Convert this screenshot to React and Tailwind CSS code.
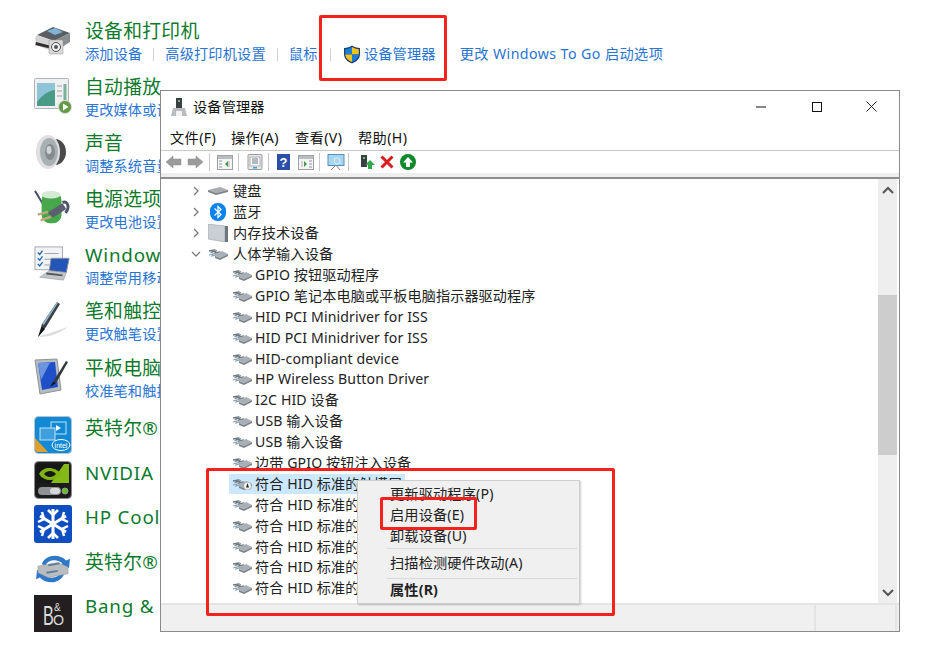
import React from "react";

const FONT = "font-['Noto_Sans','Noto_Sans_CJK_SC',sans-serif]";

const PrinterIcon = () => (
  <svg width="38" height="30" viewBox="0 0 38 30">
    <path d="M3 10 L19 2 L36 8 L20 16Z" fill="#5a5e63" />
    <path d="M13 6 L21 3 L29 7 L21 10Z" fill="#7fb4d8" />
    <path d="M1 13 L3 10 L20 16 V27 L2 20Z" fill="#d4d4d4" />
    <path d="M20 16 L36 8 V17 L20 27Z" fill="#8a8d90" />
    <rect x="2" y="17" width="14" height="3" fill="#2f2f2f" transform="rotate(14 2 17)" />
    <rect x="15" y="15" width="14" height="14" rx="1" fill="#d9d9d9" stroke="#8f8f8f" strokeWidth="0.5" />
    <circle cx="22" cy="22" r="4.5" fill="#efefef" stroke="#555" />
    <circle cx="22" cy="22" r="2" fill="#555" />
  </svg>
);

const AutoplayIcon = () => (
  <svg width="38" height="36" viewBox="0 0 38 36">
    <rect x="0.5" y="0.5" width="34" height="30" rx="1" fill="#eef0f2" stroke="#b0b4b8" />
    <rect x="3" y="5" width="18" height="23" fill="#4b9a85" />
    <path d="M3 5 H21 V12 C14 13 8 17 3 24Z" fill="#8fc4d8" />
    <rect x="23" y="7" width="5" height="2" fill="#c5c9cc" />
    <rect x="23" y="12" width="5" height="2" fill="#c5c9cc" />
    <rect x="23" y="17" width="5" height="2" fill="#c5c9cc" />
    <rect x="29.5" y="6" width="3" height="16" fill="#7fb09a" />
    <circle cx="31" cy="29" r="6.5" fill="#5f9a45" stroke="#d8d8d8" />
    <path d="M29 25.5 L34.5 29 L29 32.5Z" fill="#fff" />
  </svg>
);

const SpeakerIcon = () => (
  <svg width="34" height="36" viewBox="0 0 34 36">
    <ellipse cx="21" cy="18" rx="11" ry="13" fill="#4a4a4a" />
    <ellipse cx="14" cy="18" rx="12" ry="17" fill="#dfdfdf" />
    <ellipse cx="15" cy="18" rx="9" ry="14" fill="#a9b0b3" />
    <ellipse cx="16" cy="18" rx="5" ry="8" fill="#858b8f" />
    <ellipse cx="15" cy="16" rx="2.5" ry="4" fill="#cfd5d8" />
  </svg>
);

const PowerIcon = () => (
  <svg width="40" height="40" viewBox="0 0 40 40">
    <path d="M30 14 C36 12 38 20 33 25" fill="none" stroke="#4b4f6a" strokeWidth="3" />
    <path d="M1 2 C5 8 7 12 9 15" fill="none" stroke="#4b4f6a" strokeWidth="2" />
    <rect x="8" y="3" width="21" height="33" rx="9" fill="#46a84a" />
    <ellipse cx="18" cy="6" rx="10" ry="4" fill="#d5ead5" />
    <path d="M14 25 L30 15 L34 21 L20 30Z" fill="#5c5f74" />
    <path d="M4 27 L15 24 M7 33 L18 29" stroke="#c2a878" strokeWidth="2.5" />
  </svg>
);

const MobilityIcon = () => (
  <svg width="40" height="38" viewBox="0 0 40 38">
    <rect x="1" y="1" width="29" height="24" fill="#f2f3f5" stroke="#a4a8ac" />
    <path d="M4 7 L6 9 L9 5 M4 13 L6 15 L9 11 M4 19 L6 21 L9 17" fill="none" stroke="#2c6fb8" strokeWidth="1.5" />
    <path d="M11 8 H26 M11 14 H18 M11 20 H16" stroke="#9aa0a6" />
    <path d="M18 13 L37 13 L34 28 L16 26Z" fill="#2455b8" stroke="#8a9099" />
    <path d="M16 26 L34 28 L31 36 L6 33Z" fill="#c4c7ca" stroke="#85888c" strokeWidth="0.5" />
    <path d="M13 29 L30 31" stroke="#55585c" strokeWidth="2" />
  </svg>
);

const PenIcon = () => (
  <svg width="38" height="40" viewBox="0 0 38 40">
    <path d="M6 36 C16 34 26 29 34 27 C26 33 16 37 6 37Z" fill="#dcdcdc" />
    <path d="M4 37 L8 24 L23 2 L26 4 L12 27Z" fill="#3b4046" />
    <path d="M8 24 L23 2 L24 3 L10 25Z" fill="#8fb0c8" />
    <path d="M4 37 L8 27 L11 29Z" fill="#101214" />
  </svg>
);

const TabletIcon = () => (
  <svg width="36" height="38" viewBox="0 0 36 38">
    <path d="M1 2 L23 1 L27 32 L6 36Z" fill="#b7bcc0" stroke="#8f9499" />
    <path d="M4 5 L21 4 L24 29 L8 32Z" fill="#1e50c8" />
    <path d="M4 5 L16 4.5 L7 22Z" fill="#6d94e0" />
    <path d="M19 24 L32 3 L34 4 L22 25Z" fill="#34383c" />
    <path d="M16 29 L19 24 L22 25Z" fill="#101214" />
  </svg>
);

const IntelIcon = () => (
  <svg width="38" height="38" viewBox="0 0 38 38">
    <rect x="0.5" y="0.5" width="37" height="37" rx="4" fill="#1289d4" stroke="#b5c4cf" />
    <path d="M1 22 L14 36 H5 C2 36 1 35 1 32Z" fill="#e0a030" />
    <rect x="17" y="6" width="15" height="12" fill="none" stroke="#bfe3f7" />
    <rect x="6" y="12" width="15" height="12" fill="#3ea0dd" stroke="#bfe3f7" />
    <path d="M22 9 L27 12 L22 15Z" fill="#fff" />
    <ellipse cx="27" cy="29" rx="9" ry="5.5" fill="none" stroke="#fff" />
    <text x="27" y="31.5" textAnchor="middle" fontSize="7" fill="#fff" fontFamily="Liberation Sans">intel</text>
  </svg>
);

const NvidiaIcon = () => (
  <svg width="38" height="38" viewBox="0 0 38 38">
    <rect x="0.5" y="0.5" width="37" height="37" rx="4" fill="#1b1b1b" stroke="#8c8c8c" />
    <path d="M3 3 H30 L17 22 H3Z" fill="#161616" />
    <path d="M30 3 H35 V22 H17Z" fill="#86b817" />
    <path d="M5 13 C10 4 22 6 27 13 C22 21 10 21 5 13Z" fill="#7fb414" />
    <path d="M10 13 C13 9 19 9 22 13 C19 17 13 17 10 13Z" fill="#161616" />
    <rect x="4" y="26" width="23" height="8" rx="4" fill="#8f9295" />
    <rect x="16" y="27" width="10" height="6" rx="3" fill="#d5d7d8" />
    <circle cx="31" cy="30" r="3" fill="#5fc21f" stroke="#9b9b9b" />
  </svg>
);

const SnowIcon = () => (
  <svg width="38" height="38" viewBox="0 0 38 38">
    <rect width="38" height="38" rx="3" fill="#0f4ec0" />
    <g stroke="#fff" strokeWidth="3" fill="none">
      <path d="M19 4 V34 M6 11 L32 27 M32 11 L6 27" />
      <path d="M14 5 L19 10 L24 5 M14 33 L19 28 L24 33 M4 17 L10 14 L8 7 M34 17 L28 14 L30 7 M4 21 L10 24 L8 31 M34 21 L28 24 L30 31" strokeWidth="2.5" />
    </g>
  </svg>
);

const RstIcon = () => (
  <svg width="38" height="32" viewBox="0 0 38 34">
    <path d="M7 12 C10 3 24 -1 33 8 L37 6 L36 16 L26 14 L29 11 C23 6 14 7 11 13Z" fill="#2f78c8" />
    <path d="M31 22 C28 31 14 35 5 26 L1 28 L2 18 L12 20 L9 23 C15 28 24 27 27 21Z" fill="#2f78c8" />
    <path d="M3 14 L24 10 L35 15 V22 L14 26 L3 21Z" fill="#b9bdc0" stroke="#8e9296" strokeWidth="0.5" />
    <path d="M14 13 L26 11 M12 21 L24 19" stroke="#5e7f9c" strokeWidth="2" />
  </svg>
);

const BangIcon = () => (
  <svg width="38" height="37" viewBox="0 0 38 37">
    <rect width="38" height="37" fill="#231f20" />
    <text x="0" y="0" fontSize="27" fill="#dcdcdc" fontFamily="Liberation Sans" transform="translate(9 30) scale(0.6 1)">B</text>
    <text x="20" y="16" fontSize="10" fill="#dcdcdc" fontFamily="Liberation Sans">&amp;</text>
    <text x="0" y="0" fontSize="15" fill="#dcdcdc" fontFamily="Liberation Sans" transform="translate(19 30) scale(0.95 1)">O</text>
  </svg>
);

const ShieldIcon = () => (
  <svg width="18" height="19" viewBox="0 0 18 19" className="-my-[2px]">
    <path d="M9 0.5 C11 2 14 3 17 3 V9 C17 14 13 17 9 18.5 C5 17 1 14 1 9 V3 C4 3 7 2 9 0.5Z" fill="#1f3f73" />
    <path d="M9 2 V9.5 H2.2 V4.2 C4.8 4 7 3.2 9 2Z" fill="#1a7fd6" />
    <path d="M9 2 C11 3.2 13.2 4 15.8 4.2 V9.5 H9Z" fill="#f6c21c" />
    <path d="M2.2 9.5 H9 V17 C5.5 15.6 2.6 13.2 2.2 9.5Z" fill="#f6c21c" />
    <path d="M15.8 9.5 H9 V17 C12.5 15.6 15.4 13.2 15.8 9.5Z" fill="#1a7fd6" />
  </svg>
);

const DeviceMgrIcon = () => (
  <svg width="18" height="20" viewBox="0 0 18 20">
    <rect x="6" y="1" width="6" height="10" fill="#3a3f44" />
    <rect x="8" y="3" width="2" height="2" fill="#63c06a" />
    <path d="M3 11 H15 L17 19 H1Z" fill="#b9bcbf" />
    <rect x="6" y="14" width="6" height="5" fill="#f2f2f2" />
  </svg>
);

const HidIcon = ({ warn }) => (
  <svg width="20" height="12" viewBox="0 0 20 12" className="shrink-0">
    <path d="M1 3 L6 2 L4 4 L8 3 L7 5 L12 4" fill="none" stroke="#6f7a82" strokeWidth="1.3" />
    <path d="M5 7 L14 3 L20 6 L12 10Z" fill="#a8b0b6" />
    <path d="M7 8 L12 10 L20 6 V8 L12 12 L7 10Z" fill="#7e858a" />
    <path d="M1 7 L5 6 L4 8 L7 7" fill="none" stroke="#8ba6bb" strokeWidth="1.2" />
    {warn && <circle cx="15.5" cy="8" r="4" fill="#f4f4f4" stroke="#777" strokeWidth="0.5" />}
    {warn && <path d="M15.5 5 L17 9.5 H14Z" fill="#222" />}
  </svg>
);

const KeyboardIcon = () => (
  <svg width="20" height="10" viewBox="0 0 20 10">
    <path d="M0 4 L12 1 L20 4 L8 7Z" fill="#a9adb0" />
    <path d="M0 4 L8 7 L20 4 V6 L8 9 L0 6Z" fill="#7f8386" />
  </svg>
);

const BluetoothIcon = () => (
  <svg width="16" height="18" viewBox="0 0 16 18">
    <rect width="16" height="18" rx="7.5" fill="#0a82f0" />
    <path d="M4.5 5.5 L11 11.5 L8 14.5 V3.5 L11 6.5 L4.5 12.5" fill="none" stroke="#fff" strokeWidth="1.2" />
  </svg>
);

const MemoryIcon = () => (
  <svg width="20" height="18" viewBox="0 0 20 18">
    <path d="M0 0 L17 2 V18 L0 15Z" fill="#c9cfd4" stroke="#8f979d" strokeWidth="0.5" />
    <path d="M17 2 H20 V18 H17Z" fill="#6e767c" />
  </svg>
);

const Chevron = ({ open }) => (
  <svg width="10" height="10" viewBox="0 0 10 10" className="shrink-0">
    <path d={open ? "M1 3 L5 7 L9 3" : "M3 1 L7 5 L3 9"} fill="none" stroke="#7a7a7a" strokeWidth="1.3" />
  </svg>
);

const ToolFrame = ({ children }) => (
  <svg width="16" height="15" viewBox="0 0 16 15">
    <rect x="0.5" y="0.5" width="15" height="14" fill="#f4f4f4" stroke="#a0a0a0" />
    <rect x="1" y="1" width="14" height="3" fill="#b9bdc1" />
    {children}
  </svg>
);

const ToolSep = ({ className }) => <div className={`w-px h-[18px] bg-[#c8c8c8] ${className}`} />;

const Toolbar = () => (
  <div className="flex items-center h-[22px] pl-[4px]">
    <svg width="17" height="14" viewBox="0 0 17 14">
      <path d="M1 7 L8 1 V4 H16 V10 H8 V13Z" fill="#9b9b9b" stroke="#8a8a8a" strokeWidth="0.5" />
    </svg>
    <svg width="17" height="14" viewBox="0 0 17 14" className="ml-[5px]">
      <path d="M16 7 L9 1 V4 H1 V10 H9 V13Z" fill="#9b9b9b" stroke="#8a8a8a" strokeWidth="0.5" />
    </svg>
    <ToolSep className="ml-[5px]" />
    <span className="ml-[7px] flex">
      <ToolFrame>
        <path d="M2 6 H5 M2 9 H5 M2 12 H5" stroke="#8a9aa8" />
        <path d="M11 6 L8 9 L11 12Z" fill="#3f9a4a" />
        <path d="M12 6 V12" stroke="#b0b0b0" />
      </ToolFrame>
    </span>
    <ToolSep className="ml-[5px]" />
    <span className="ml-[8px] flex">
      <svg width="16" height="16" viewBox="0 0 16 16">
        <rect x="1" y="0.5" width="14" height="15" rx="1" fill="#e8e8e8" stroke="#9a9a9a" />
        <rect x="3" y="3" width="10" height="9" fill="#fafafa" stroke="#b0b0b0" />
        <path d="M5 5 H11 M5 7 H11 M5 9 H11" stroke="#6a7d90" />
        <rect x="6" y="13" width="4" height="1.5" fill="#3da0d8" />
      </svg>
    </span>
    <ToolSep className="ml-[5px]" />
    <span className="ml-[8px] flex">
      <svg width="13" height="16" viewBox="0 0 13 16">
        <rect width="13" height="16" fill="#2b4fa8" />
        <text x="6.5" y="13" textAnchor="middle" fontSize="13" fontWeight="700" fill="#fff" fontFamily="Liberation Sans">?</text>
      </svg>
    </span>
    <span className="ml-[8px] flex">
      <ToolFrame>
        <path d="M4 6 V12" stroke="#b0b0b0" />
        <path d="M6 6 L9 9 L6 12Z" fill="#3f9a4a" />
        <path d="M11 6 H14 M11 9 H14 M11 12 H14" stroke="#8a9aa8" />
      </ToolFrame>
    </span>
    <ToolSep className="ml-[5px]" />
    <span className="ml-[7px] flex">
      <svg width="18" height="17" viewBox="0 0 18 17">
        <rect x="1" y="0.5" width="16" height="11" fill="#a8d6f2" stroke="#5a8fb5" />
        <path d="M4 16 L9 11 L13 16" fill="none" stroke="#7f8f9b" />
        <circle cx="10" cy="7" r="3" fill="none" stroke="#d8eefa" />
      </svg>
    </span>
    <ToolSep className="ml-[3px]" />
    <span className="ml-[11px] flex">
      <svg width="16" height="16" viewBox="0 0 16 16">
        <rect x="1" y="1" width="6" height="12" fill="#3a3f44" />
        <rect x="3" y="3" width="2" height="2" fill="#63c06a" />
        <path d="M10 6 L15 11 H12 V15 H8 V11 H5Z" fill="#2fa84a" />
      </svg>
    </span>
    <span className="ml-[4px] flex">
      <svg width="14" height="14" viewBox="0 0 14 14">
        <path d="M1.5 1.5 L12.5 12.5 M12.5 1.5 L1.5 12.5" stroke="#d81e1e" strokeWidth="3" />
      </svg>
    </span>
    <span className="ml-[6px] flex">
      <svg width="16" height="16" viewBox="0 0 16 16">
        <circle cx="8" cy="8" r="8" fill="#0c8a2a" />
        <path d="M8 3 L13 8.5 H10 V13 H6 V8.5 H3Z" fill="#fff" />
      </svg>
    </span>
  </div>
);

const topRows = [
  { icon: <PrinterIcon />, title: "设备和打印机" },
  { icon: <AutoplayIcon />, title: "自动播放", sub: "更改媒体或设备的默认设置" },
  { icon: <SpeakerIcon />, title: "声音", sub: "调整系统音量" },
  { icon: <PowerIcon />, title: "电源选项", sub: "更改电池设置" },
  { icon: <MobilityIcon />, title: "Windows 移动中心", sub: "调整常用移动设置", latin: true },
  { icon: <PenIcon />, title: "笔和触控", sub: "更改触笔设置" },
  { icon: <TabletIcon />, title: "平板电脑设置", sub: "校准笔和触控显示器" },
];

const bottomRows = [
  { icon: <IntelIcon />, title: "英特尔® 显卡设置" },
  { icon: <NvidiaIcon />, title: "NVIDIA 控制面板", latin: true },
  { icon: <SnowIcon />, title: "HP CoolSense", latin: true },
  { icon: <RstIcon />, title: "英特尔® 快速存储技术" },
  { icon: <BangIcon />, title: "Bang & Olufsen", latin: true },
];

const hidRows = [
  "GPIO 按钮驱动程序",
  "GPIO 笔记本电脑或平板电脑指示器驱动程序",
  "HID PCI Minidriver for ISS",
  "HID PCI Minidriver for ISS",
  "HID-compliant device",
  "HP Wireless Button Driver",
  "I2C HID 设备",
  "USB 输入设备",
  "USB 输入设备",
  "边带 GPIO 按钮注入设备",
];

const TreeRow = ({ open, icon, children }) => (
  <div className="h-[20.9px] flex items-center pl-[30px] text-[14.2px] tracking-[0.15px] leading-none text-[#222] whitespace-nowrap">
    <Chevron open={open} />
    <span className="w-[24px] ml-[5px] flex justify-center shrink-0">{icon}</span>
    <span className="ml-[3px]">{children}</span>
  </div>
);

const ChildRow = ({ warn, selected, children }) => (
  <div className="h-[20.9px] flex items-center pl-[68px] text-[14.1px] tracking-[0.12px] leading-none text-[#222] whitespace-nowrap">
    <div className={`flex items-center h-[20px] pl-[3px] ${selected ? "w-[176px] bg-[#cce8ff]" : ""}`}>
      <HidIcon warn={warn} />
      <span className="ml-[3px]">{children}</span>
    </div>
  </div>
);

const DeviceManager = () => (
  <div className="absolute left-[160px] top-[90px] w-[740px] h-[542px] bg-white border border-[#8a8a8a] flex flex-col">
    <div className="h-[34px] flex items-center shrink-0 pl-[9px] pb-[3px]">
      <DeviceMgrIcon />
      <span className="ml-[5px] text-[14.2px] tracking-[0.15px] text-[#111]">设备管理器</span>
      <div className="ml-auto flex items-center">
        <span className="w-[56px] flex justify-center">
          <svg width="10" height="10" viewBox="0 0 10 10"><path d="M0 5 H10" stroke="#111" /></svg>
        </span>
        <span className="w-[55px] flex justify-center">
          <svg width="10" height="10" viewBox="0 0 10 10"><rect x="0.5" y="0.5" width="9" height="9" fill="none" stroke="#111" /></svg>
        </span>
        <span className="w-[55px] flex justify-center">
          <svg width="11" height="11" viewBox="0 0 11 11"><path d="M0.5 0.5 L10.5 10.5 M10.5 0.5 L0.5 10.5" stroke="#222" /></svg>
        </span>
      </div>
    </div>
    <div className="h-[25px] flex items-center pl-[9px] shrink-0 text-[14.2px] tracking-[0.4px] text-[#111]">
      <span className="w-[61px]">文件(F)</span>
      <span className="w-[64px]">操作(A)</span>
      <span className="w-[63px]">查看(V)</span>
      <span>帮助(H)</span>
    </div>
    <div className="border-t border-[#c8c8c8] shrink-0">
      <Toolbar />
    </div>
    <div className="h-[6px] bg-[#eeeeee] border-b-2 border-[#8f8f8f] shrink-0" />
    <div className="flex-1 flex min-h-0">
      <div className="flex-1 pt-[2px]">
        <TreeRow icon={<KeyboardIcon />}>键盘</TreeRow>
        <TreeRow icon={<BluetoothIcon />}>蓝牙</TreeRow>
        <TreeRow icon={<MemoryIcon />}>内存技术设备</TreeRow>
        <TreeRow open icon={<HidIcon />}>人体学输入设备</TreeRow>
        {hidRows.map((t, i) => (
          <ChildRow key={i}>{t}</ChildRow>
        ))}
        <ChildRow warn selected>符合 HID 标准的触摸屏</ChildRow>
        <ChildRow>符合 HID 标准的供应商定义设备</ChildRow>
        <ChildRow>符合 HID 标准的供应商定义设备</ChildRow>
        <ChildRow>符合 HID 标准的供应商定义设备</ChildRow>
        <ChildRow>符合 HID 标准的供应商定义设备</ChildRow>
        <ChildRow>符合 HID 标准的供应商定义设备</ChildRow>
      </div>
      <div className="w-[19px] mr-[2px] bg-[#eeeeee] flex flex-col items-center shrink-0">
        <svg width="12" height="8" viewBox="0 0 12 8" className="mt-[7px]">
          <path d="M1 7 L6 2 L11 7" fill="none" stroke="#555" strokeWidth="2" />
        </svg>
        <div className="w-full h-[160px] bg-[#cdcdcd] mt-[101px]" />
        <div className="flex-1" />
        <svg width="12" height="8" viewBox="0 0 12 8" className="mb-[6px]">
          <path d="M1 1 L6 6 L11 1" fill="none" stroke="#555" strokeWidth="2" />
        </svg>
      </div>
    </div>
    <div className="h-[28px] bg-[#f0f0f0] border-t-2 border-[#e4e4e4] flex shrink-0">
      <div className="w-[655px] border-r-2 border-[#e4e4e4]" />
      <div className="w-[81px] border-r-2 border-[#e4e4e4]" />
    </div>
  </div>
);

const ContextMenu = () => (
  <div className="absolute left-[357px] top-[480px] w-[223px] h-[124px] bg-[#f0f0f0] border border-[#cdcdcd] shadow-[1px_1px_2px_rgba(0,0,0,0.2)] pl-[32px] pt-[2px] text-[14.2px] tracking-[0.15px] leading-[21px] text-[#222]">
    <div className="h-[21px]">更新驱动程序(P)</div>
    <div className="h-[21px]">启用设备(E)</div>
    <div className="h-[21px]">卸载设备(U)</div>
    <div className="h-px bg-[#d8d8d8] -ml-[3px] mr-[2px] mt-[2px] mb-[3px]" />
    <div className="h-[21px]">扫描检测硬件改动(A)</div>
    <div className="h-px bg-[#d8d8d8] -ml-[3px] mr-[2px] mt-[5px] mb-0" />
    <div className="h-[21px] font-bold">属性(R)</div>
  </div>
);

export default function App() {
  return (
    <div className={`relative w-[947px] h-[665px] bg-white overflow-hidden ${FONT}`}>
      <div className="pl-[34px] pt-[15px]">
        {topRows.map((r, i) => (
          <div key={i} className="h-[56.1px] flex items-start">
            <div className="w-[38px] h-[50px] flex items-center shrink-0">{r.icon}</div>
            <div className="ml-[13px] whitespace-nowrap">
              <div className={`text-[18.8px] leading-[32px] text-[#0d7a2b] ${r.latin ? "tracking-[0.8px]" : "tracking-[0.3px]"}`}>{r.title}</div>
              {r.sub ? (
                <div className="text-[14.2px] tracking-[0.1px] leading-[16px] -mt-[1px] text-[#2a74d4]">{r.sub}</div>
              ) : (
                <div className="flex items-center text-[14.2px] tracking-[0.15px] leading-[16px] -mt-[1px] text-[#2a74d4]">
                  <span>添加设备</span>
                  <span className="w-px h-[13px] bg-[#d0d0d0] mx-[11px]" />
                  <span>高级打印机设置</span>
                  <span className="w-px h-[13px] bg-[#d0d0d0] mx-[11px]" />
                  <span className="tracking-[0.4px]">鼠标</span>
                  <span className="w-px h-[13px] bg-[#d0d0d0] mx-[12px]" />
                  <ShieldIcon />
                  <span className="ml-[3px]">设备管理器</span>
                  <span className="ml-[24px] tracking-[0.42px]">更改 Windows To Go 启动选项</span>
                </div>
              )}
            </div>
          </div>
        ))}
        <div className="mt-[5px]">
          {bottomRows.map((r, i) => (
            <div key={i} className="h-[44.6px] flex items-center">
              <div className="w-[38px] flex items-center shrink-0">{r.icon}</div>
              <div className={`ml-[13px] -mt-[14px] whitespace-nowrap text-[18.8px] leading-[26px] text-[#0d7a2b] ${r.latin ? "tracking-[0.8px]" : "tracking-[0.3px]"}`}>{r.title}</div>
            </div>
          ))}
        </div>
      </div>

      <DeviceManager />
      <ContextMenu />

      <div className="absolute left-[319px] top-[15px] w-[128px] h-[66px] border-[3px] border-[#f5211c] rounded-[2px]" />
      <div className="absolute left-[206px] top-[468px] w-[409px] h-[148px] border-[3px] border-[#f5211c] rounded-[2px]" />
      <div className="absolute left-[380px] top-[497px] w-[97px] h-[33px] border-[3px] border-[#f5211c] rounded-[2px]" />
    </div>
  );
}
